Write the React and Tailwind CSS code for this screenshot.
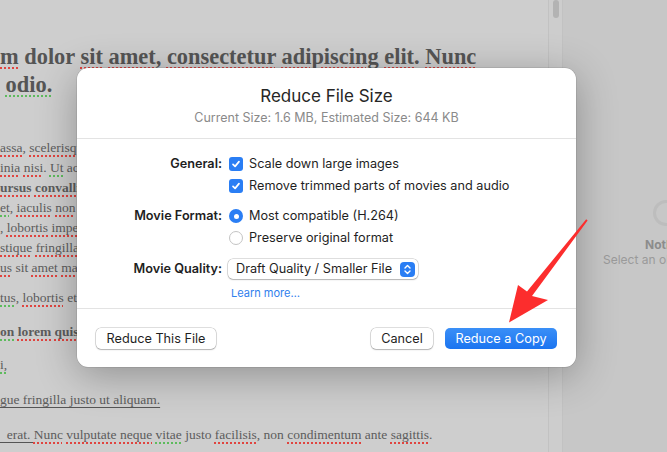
import React from "react";

const R = ({ children }) => (
  <span className="underline decoration-dotted decoration-[#e0443f] decoration-[2px] underline-offset-[3px]">{children}</span>
);
const G = ({ children }) => (
  <span className="underline decoration-dotted decoration-[#5dbb5d] decoration-[2px] underline-offset-[3px]">{children}</span>
);

function Checkbox() {
  return (
    <span className="w-[14px] h-[14px] rounded-[3px] bg-[#2a7ef4] flex items-center justify-center shrink-0">
      <svg width="10" height="10" viewBox="0 0 10 10">
        <path d="M2 5.3 L4.1 7.4 L8 2.6" fill="none" stroke="white" strokeWidth="1.7" strokeLinecap="round" strokeLinejoin="round" />
      </svg>
    </span>
  );
}

function Radio({ on }) {
  return on ? (
    <span className="w-[14px] h-[14px] rounded-full bg-[#2a7ef4] flex items-center justify-center shrink-0">
      <span className="w-[5px] h-[5px] rounded-full bg-white" />
    </span>
  ) : (
    <span className="w-[14px] h-[14px] rounded-full bg-white border border-[#c4c4c4] shrink-0" />
  );
}

export default function App() {
  return (
    <div className="w-[667px] h-[452px] relative overflow-hidden flex bg-[#cdcdcd]" style={{ fontFamily: "Inter, 'Noto Sans', sans-serif" }}>
      {/* document */}
      <div className="w-[548px] h-full overflow-hidden bg-[#cecece] text-[#5c5c5c] whitespace-nowrap" style={{ fontFamily: "'Liberation Serif', 'DejaVu Serif', serif" }}>
        <div className="pt-[43px] text-[22.4px] font-bold leading-[28px] text-[#555]">
          <div><R>m</R> dolor <R>sit</R> <R>amet</R>, <R>consectetur</R> <R>adipiscing</R> <R>elit</R>. <R>Nunc</R></div>
          <div>&nbsp;<G>odio.</G></div>
        </div>
        <div className="mt-[39px] text-[13.5px] leading-[20px]">
          <div><R>assa</R>, <R>scelerisque</R> sed</div>
          <div><R>inia</R> <R>nisi</R>. <G>Ut</G> ac</div>
          <div className="font-bold"><R>ursus</R> <R>convallis</R> </div>
          <div><G>et</G>, <R>iaculis</R> <R>non</R></div>
          <div>, <R>lobortis</R> <R>imperdiet</R></div>
          <div><R>stique</R> <R>fringilla</R></div>
          <div><R>us</R> sit <R>amet</R> <R>mauris</R></div>
          <div className="mt-[10px]"><G>tus</G>, <R>lobortis</R> et</div>
          <div className="mt-[14px] font-bold"><G>on</G> <R>lorem</R> <R>quis</R></div>
          <div className="mt-[13px]"><G>i,</G></div>
          <div className="mt-[15px] underline decoration-[#555] underline-offset-[3px]">gue fringilla justo ut aliquam.</div>
          <div className="mt-[15px]"><span className="underline decoration-[#555] underline-offset-[3px]">&nbsp;&nbsp;erat. </span><R>Nunc</R> <R>vulputate</R> <R>neque</R> <G>vitae</G> justo <R>facilisis</R>, non <R>condimentum</R> ante <R>sagittis</R>.</div>
        </div>
      </div>
      {/* scrollbar */}
      <div className="w-[15px] h-full bg-[#cdcdcd] border-l border-r border-[#c2c2c2] flex justify-center">
        <div className="w-[6px] h-[18px] rounded-full bg-[#b3b3b3]" />
      </div>
      {/* right panel */}
      <div className="flex-1 h-full bg-[#c7c7c7] relative overflow-hidden">
        <div className="absolute left-[90px] top-[200px] w-[26px] h-[26px] rounded-full border-[3px] border-[#bdbdbd]" />
        <div className="pt-[237px] pl-[82px] text-[12px] font-bold text-[#8c8c8c] leading-[15px] whitespace-nowrap">Nothing</div>
        <div className="pl-[40px] text-[12px] text-[#9a9a9a] leading-[16px] whitespace-nowrap">Select an object</div>
      </div>

      {/* dialog */}
      <div className="absolute left-[77px] top-[68px] w-[499px] h-[299px] bg-white rounded-[11px] shadow-[0_8px_40px_rgba(0,0,0,0.3),0_0_0_0.5px_rgba(0,0,0,0.15)] flex flex-col text-[#1f1f1f]">
        <div className="pt-[17px] text-center text-[17px] leading-[22px] text-[#262626]">Reduce File Size</div>
        <div className="mt-[3px] text-center text-[12.5px] leading-[16px] text-[#8a8a8a]">Current Size: 1.6 MB, Estimated Size: 644 KB</div>
        <div className="mt-[12px] h-px bg-[#e3e3e3]" />
        <div className="grid grid-cols-[145px_1fr] gap-x-[7px] pt-[17px] text-[12.7px] leading-[16px] items-center">
          <div className="text-right font-semibold">General:</div>
          <div className="flex items-center gap-[6px]"><Checkbox />Scale down large images</div>
          <div />
          <div className="mt-[6px] flex items-center gap-[6px]"><Checkbox />Remove trimmed parts of movies and audio</div>
          <div className="mt-[14px] text-right font-semibold">Movie Format:</div>
          <div className="mt-[14px] flex items-center gap-[6px]"><Radio on />Most compatible (H.264)</div>
          <div />
          <div className="mt-[6px] flex items-center gap-[6px]"><Radio />Preserve original format</div>
          <div className="mt-[13px] text-right font-semibold">Movie Quality:</div>
          <div className="mt-[13px] ml-[-1px]">
            <div className="w-[190px] h-[20px] rounded-[5px] bg-white shadow-[0_0_0_0.5px_rgba(0,0,0,0.25),0_1px_1.5px_rgba(0,0,0,0.2)] flex items-center justify-between pl-[8px] pr-[3px]">
              <span className="whitespace-nowrap">Draft Quality / Smaller File</span>
              <span className="w-[15px] h-[15px] rounded-[4px] bg-[#2a7ef4] flex items-center justify-center">
                <svg width="9" height="11" viewBox="0 0 9 11">
                  <path d="M2 4 L4.5 1.6 L7 4 M2 7 L4.5 9.4 L7 7" fill="none" stroke="white" strokeWidth="1.4" strokeLinecap="round" strokeLinejoin="round" />
                </svg>
              </span>
            </div>
          </div>
          <div />
          <div className="mt-[7px] ml-[2px] text-[11px] leading-[14px] text-[#2f80ed]">Learn more…</div>
        </div>
        <div className="mt-[8px] h-px bg-[#e3e3e3]" />
        <div className="flex items-center px-[19px] pt-[19px] text-[12.7px] whitespace-nowrap">
          <div className="h-[21px] rounded-[5px] bg-white shadow-[0_0_0_0.5px_rgba(0,0,0,0.25),0_1px_1.5px_rgba(0,0,0,0.2)] flex items-center w-[120px] justify-center">Reduce This File</div>
          <div className="flex-1" />
          <div className="h-[21px] w-[62px] rounded-[5px] bg-white shadow-[0_0_0_0.5px_rgba(0,0,0,0.25),0_1px_1.5px_rgba(0,0,0,0.2)] flex items-center justify-center">Cancel</div>
          <div className="ml-[12px] h-[21px] w-[112px] rounded-[5px] bg-gradient-to-b from-[#3a8ff7] to-[#1a74f0] text-white flex items-center justify-center">Reduce a Copy</div>
        </div>
      </div>

      {/* red arrow annotation */}
      <svg className="absolute left-0 top-0 pointer-events-none" width="667" height="452" viewBox="0 0 667 452">
        <polygon points="586.2,219.2 587.6,220.6 532,296 548,300 509,322.5 518,285 527,291.5" fill="#fc2d2d" />
      </svg>
    </div>
  );
}
